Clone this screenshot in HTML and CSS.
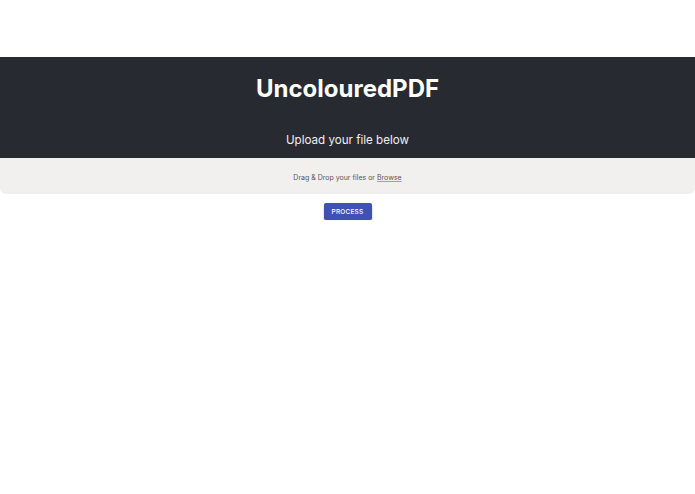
FILE: index.html
```html
<!DOCTYPE html>
<html>
<head>
<meta charset="utf-8">
<link rel="stylesheet" href="styles.css">
</head>
<body>
<main class="page">
  <header class="hero">
    <h1 class="title">UncolouredPDF</h1>
    <p class="subtitle">Upload your file below</p>
  </header>
  <div class="drop">
    <span class="drop-label">Drag &amp; Drop your files or <span class="browse">Browse</span></span>
  </div>
  <div class="actions">
    <button class="btn">PROCESS</button>
  </div>
</main>
</body>
</html>
```
FILE: styles.css
```css
html, body {
  margin: 0;
  padding: 0;
  background: #fff;
  font-family: Inter, "Noto Sans", sans-serif;
}
.page {
  padding-top: 57px;
}
.hero {
  background: #282a31;
  color: #fff;
  text-align: center;
  height: 101px;
  display: flex;
  flex-direction: column;
  align-items: center;
  box-sizing: border-box;
  padding-top: 17px;
}
.title {
  margin: 0;
  font-size: 24px;
  font-weight: 700;
  line-height: 30px;
  letter-spacing: 0;
}
.subtitle {
  margin: 27px 0 0;
  font-size: 11.6px;
  line-height: 18px;
  color: #f0f0f0;
}
.drop {
  background: #f1f0ef;
  height: 36px;
  box-sizing: border-box;
  padding-top: 2px;
  border-radius: 0 0 6px 6px;
  display: flex;
  align-items: center;
  justify-content: center;
}
.drop-label {
  font-size: 7px;
  color: #555;
}
.browse {
  text-decoration: underline;
  text-decoration-color: #a0a0a0;
}
.actions {
  display: flex;
  justify-content: center;
  padding-top: 9px;
}
.btn {
  background: #3f51b5;
  color: #fff;
  border: none;
  border-radius: 2px;
  width: 48px;
  height: 17px;
  padding: 0;
  font-family: Inter, sans-serif;
  font-size: 6.5px;
  font-weight: 500;
  letter-spacing: 0.2px;
  box-shadow: 0 1px 2px rgba(0,0,0,0.3);
}
```
